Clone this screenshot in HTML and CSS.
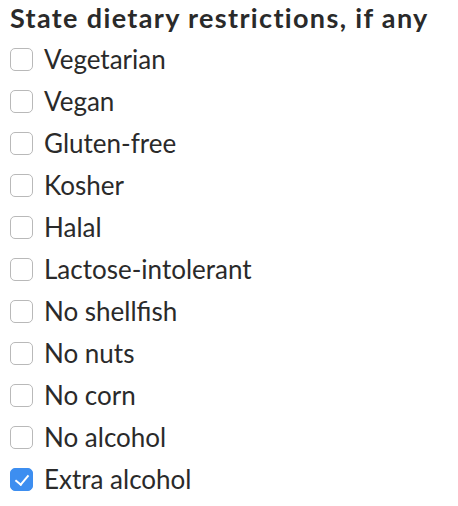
FILE: index.html
```html
<!DOCTYPE html>
<html lang="en">
<head>
    <meta charset="UTF-8">
    <title>Dietary restrictions</title>
    <link rel="stylesheet" href="styles.css">
</head>
<body>
    <fieldset class="diet">
        <legend>State dietary restrictions, if any</legend>
        <label class="option"><input type="checkbox"><span class="box"></span>Vegetarian</label>
        <label class="option"><input type="checkbox"><span class="box"></span>Vegan</label>
        <label class="option"><input type="checkbox"><span class="box"></span>Gluten-free</label>
        <label class="option"><input type="checkbox"><span class="box"></span>Kosher</label>
        <label class="option"><input type="checkbox"><span class="box"></span>Halal</label>
        <label class="option"><input type="checkbox"><span class="box"></span>Lactose-intolerant</label>
        <label class="option"><input type="checkbox"><span class="box"></span>No shellfish</label>
        <label class="option"><input type="checkbox"><span class="box"></span>No nuts</label>
        <label class="option"><input type="checkbox"><span class="box"></span>No corn</label>
        <label class="option"><input type="checkbox"><span class="box"></span>No alcohol</label>
        <label class="option"><input type="checkbox" checked><span class="box"></span>Extra alcohol</label>
    </fieldset>
</body>
</html>
```

FILE: styles.css
```css
* {
    margin: 0;
    padding: 0;
    box-sizing: border-box;
}

body {
    font-family: Lato, 'Open Sans', sans-serif;
    color: #2a2a2a;
    background: #ffffff;
    padding: 2px 10px;
}

.diet {
    border: none;
    display: flex;
    flex-direction: column;
}

.diet legend {
    font-weight: 700;
    font-size: 27px;
    letter-spacing: 1.35px;
    line-height: 32px;
    margin-bottom: 4px;
}

.option {
    display: flex;
    align-items: center;
    gap: 11px;
    font-size: 26px;
    line-height: 42px;
    height: 42px;
}

.option input {
    display: none;
}

.box {
    width: 23px;
    height: 23px;
    border: 1px solid #b9b9b9;
    border-radius: 5px;
    background: #ffffff;
    position: relative;
}

.option input:checked + .box {
    background: #3d8ef0;
    border-color: #3d8ef0;
}

.option input:checked + .box::after {
    content: "";
    position: absolute;
    left: 7px;
    top: 3px;
    width: 6px;
    height: 11px;
    border: solid #ffffff;
    border-width: 0 2px 2px 0;
    transform: rotate(40deg);
}
```
